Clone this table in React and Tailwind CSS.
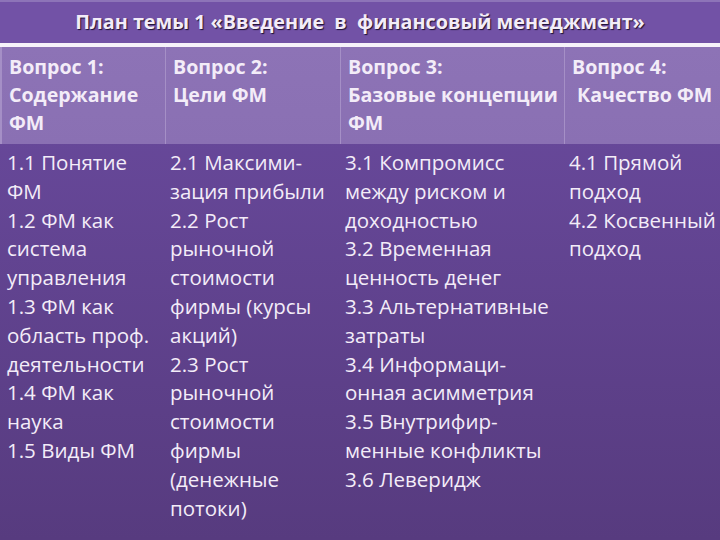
const heads = [
    ['Вопрос 1:', 'Содержание', 'ФМ'],
    ['Вопрос 2:', 'Цели ФМ'],
    ['Вопрос 3:', 'Базовые концепции', 'ФМ'],
    ['Вопрос 4:', '\u00a0Качество ФМ'],
];

const cells = [
    ['1.1 Понятие', 'ФМ', '1.2 ФМ как', 'система', 'управления', '1.3 ФМ как', 'область проф.', 'деятельности', '1.4 ФМ как', 'наука', '1.5 Виды ФМ'],
    ['2.1 Максими-', 'зация прибыли', '2.2 Рост', 'рыночной', 'стоимости', 'фирмы (курсы', 'акций)', '2.3 Рост', 'рыночной', 'стоимости', 'фирмы', '(денежные', 'потоки)'],
    ['3.1 Компромисс', 'между риском и', 'доходностью', '3.2 Временная', 'ценность денег', '3.3 Альтернативные', 'затраты', '3.4 Информаци-', 'онная асимметрия', '3.5 Внутрифир-', 'менные конфликты', '3.6 Леверидж'],
    ['4.1 Прямой', 'подход', '4.2 Косвенный', 'подход'],
];

const borders = ['', 'border-l border-[#a58fc6]', 'border-l border-[#a58fc6]', 'border-l border-[#a58fc6]'];

export default function App() {
    return (
        <div
            className="h-[540px] w-[720px] overflow-hidden bg-linear-to-b from-[#6c4ca2] to-[#573b7f] text-[#f3ecf8]"
            style={{ fontFamily: '"Open Sans", "Noto Sans", sans-serif' }}
        >
            <div className="flex h-[43px] items-center justify-center border-t-2 border-[#8d74b8] bg-[#7252a6] pb-[2px] text-[19.8px] font-bold [text-shadow:1px_1px_1px_#1c1030]">
                План темы 1 «Введение&nbsp; в&nbsp; финансовый менеджмент»
            </div>
            <div className="h-[4px] bg-[#f6f2fa]" />
            <div className="grid grid-cols-[163px_175px_224px_1fr] border-l-2 border-[#a58fc6] bg-linear-to-b from-[#8d73b6] to-[#8a70b3]">
                {heads.map((lines, i) => (
                    <div key={i} className={`h-[97px] whitespace-nowrap px-[7px] pt-[6px] text-[19.6px] font-bold leading-[28px] ${borders[i]}`}>
                        {lines.map((l) => (
                            <div key={l}>{l}</div>
                        ))}
                    </div>
                ))}
            </div>
            <div className="grid grid-cols-[163px_175px_224px_1fr]">
                {cells.map((lines, i) => (
                    <div key={i} className="whitespace-nowrap px-[7px] pt-[4px] text-[20.5px] leading-[28.8px]">
                        {lines.map((l) => (
                            <div key={l}>{l}</div>
                        ))}
                    </div>
                ))}
            </div>
        </div>
    );
}
